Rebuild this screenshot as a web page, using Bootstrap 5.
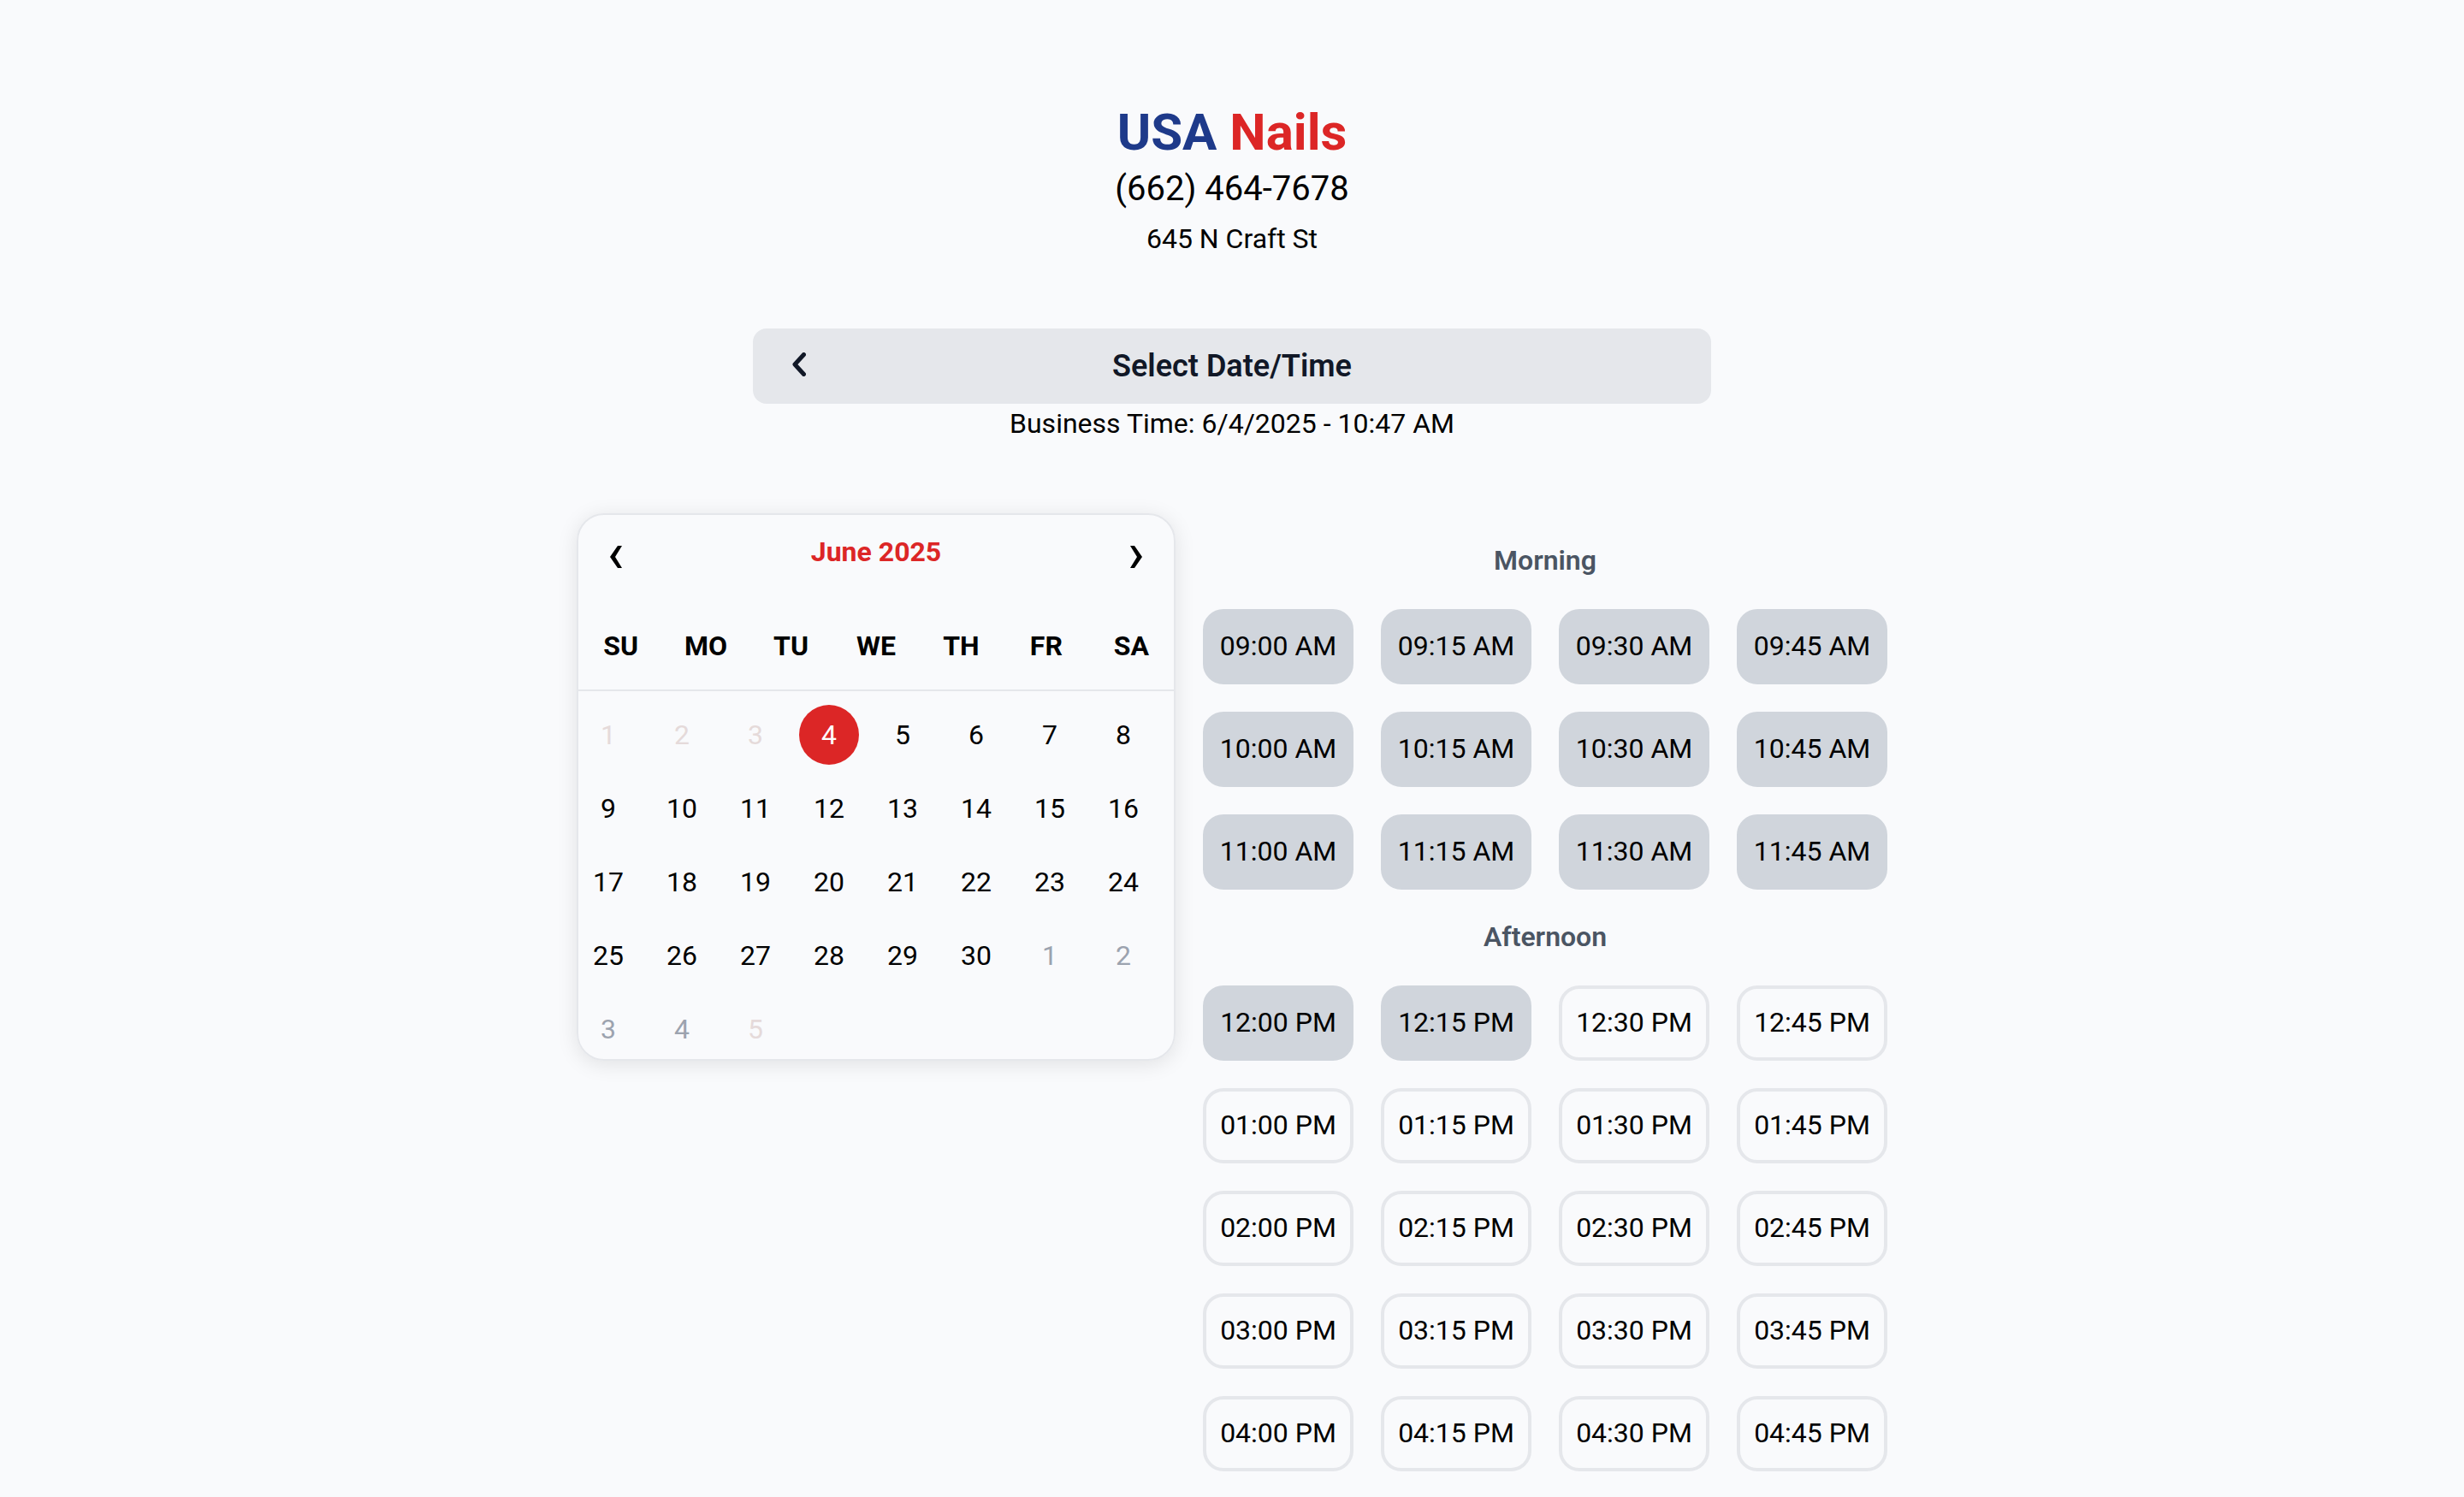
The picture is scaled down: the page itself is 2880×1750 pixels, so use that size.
<!DOCTYPE html>
<html lang="en">
<head>
<meta charset="utf-8">
<meta name="viewport" content="width=device-width, initial-scale=1">
<title>USA Nails - Select Date/Time</title>
<link href="https://cdn.jsdelivr.net/npm/bootstrap@5.3.0/dist/css/bootstrap.min.css" rel="stylesheet">
<style>
  body { background: #f9fafc; color: #000; font-family: Roboto, "Liberation Sans", sans-serif; font-size: 32px; line-height: 46px; }
  .page { padding: 120px 24px 30px; }
  .brand { font-size: 60px; line-height: 70px; font-weight: 700; color: #1e3a8a; }
  .brand span, .month { color: #dc2626; }
  .phone { font-size: 40px; line-height: 62px; }
  .titlebar { max-width: 1120px; margin-top: 82px; padding: 16px 36px; background: #e5e7eb; border-radius: 16px; color: #111827; display: grid; grid-template-columns: 36px 1fr 36px; align-items: center; }
  .titlebar h2 { font-size: 36px; line-height: 56px; font-weight: 600; }
  .plain { border: 0; background: none; padding: 0; color: inherit; display: flex; align-items: center; justify-content: center; }
  .titlebar .plain { padding-bottom: 4px; }
  .booking { gap: 32px; margin-top: 82px; }
  .calendar { width: 700px; max-width: 100%; border: 2px solid #e5e7eb; border-radius: 32px; box-shadow: 0 4px 24px rgba(0, 0, 0, .1); overflow: hidden; }
  .cal-head { padding: 20px 0 26px; }
  .cal-head button { width: 88px; height: 58px; }
  .month { font-size: 32px; line-height: 46px; font-weight: 700; }
  .weekdays { display: grid; grid-template-columns: repeat(7, 1fr); padding: 26px 0 28px; border-bottom: 2px solid #e5e7eb; font-weight: 700; text-align: center; }
  .days { gap: 16px; padding-top: 16px; }
  .days button { width: 70px; height: 70px; border-radius: 50%; }
  .days .past { color: #e5dada; }
  .days .next { color: #9ca3af; }
  .days .today { background: #dc2626; color: #fff; }
  .slots { width: 800px; max-width: 100%; padding-top: 32px; }
  .slots h3 { font-size: 32px; line-height: 46px; font-weight: 600; color: #4b5563; margin: 0 0 34px; text-align: center; }
  .slot-grid { display: grid; grid-template-columns: repeat(auto-fill, minmax(176px, 1fr)); gap: 32px; margin-bottom: 32px; }
  .slot-grid button { height: 88px; padding: 0 0 2px; border: 4px solid #e5e7eb; border-radius: 24px; background: none; color: #000; white-space: nowrap; }
  .slot-grid button:disabled { background: #d0d5dc; border-color: #d0d5dc; }
</style>
</head>
<body>
<main class="page d-flex flex-column align-items-center">
  <header class="text-center">
    <h1 class="brand m-0">USA <span>Nails</span></h1>
    <div class="phone">(662) 464-7678</div>
    <div class="mt-1">645 N Craft St</div>
  </header>

  <div class="titlebar w-100">
    <button class="plain" type="button" aria-label="Back">
      <svg width="16" height="28" viewBox="0 0 16 28" fill="none" stroke="currentColor" stroke-width="5" stroke-linecap="round" stroke-linejoin="round"><path d="M13.5 2.5 3 14l10.500 11.500"/></svg>
    </button>
    <h2 class="m-0 text-center">Select Date/Time</h2>
  </div>
  <div class="text-center">Business Time: 6/4/2025 - 10:47 AM</div>

  <div class="booking d-flex flex-wrap justify-content-center align-items-start w-100">
    <section class="calendar">
      <div class="cal-head d-flex justify-content-between align-items-start">
        <button class="plain" type="button" aria-label="Previous month"><svg width="14" height="26" viewBox="0 0 14 26" fill="currentColor"><path d="M14 0H9L0 13 9 26h5L6 13z"/></svg></button>
        <h3 class="month m-0">June 2025</h3>
        <button class="plain" type="button" aria-label="Next month"><svg width="14" height="26" viewBox="0 0 14 26" fill="currentColor"><path d="M0 0h5l9 13-9 13H0l8-13z"/></svg></button>
      </div>
      <div class="weekdays"><span>SU</span><span>MO</span><span>TU</span><span>WE</span><span>TH</span><span>FR</span><span>SA</span></div>
      <div class="days d-flex flex-wrap">
        <button class="plain past" type="button" disabled>1</button>
        <button class="plain past" type="button" disabled>2</button>
        <button class="plain past" type="button" disabled>3</button>
        <button class="plain today" type="button">4</button>
        <button class="plain" type="button">5</button>
        <button class="plain" type="button">6</button>
        <button class="plain" type="button">7</button>
        <button class="plain" type="button">8</button>
        <button class="plain" type="button">9</button>
        <button class="plain" type="button">10</button>
        <button class="plain" type="button">11</button>
        <button class="plain" type="button">12</button>
        <button class="plain" type="button">13</button>
        <button class="plain" type="button">14</button>
        <button class="plain" type="button">15</button>
        <button class="plain" type="button">16</button>
        <button class="plain" type="button">17</button>
        <button class="plain" type="button">18</button>
        <button class="plain" type="button">19</button>
        <button class="plain" type="button">20</button>
        <button class="plain" type="button">21</button>
        <button class="plain" type="button">22</button>
        <button class="plain" type="button">23</button>
        <button class="plain" type="button">24</button>
        <button class="plain" type="button">25</button>
        <button class="plain" type="button">26</button>
        <button class="plain" type="button">27</button>
        <button class="plain" type="button">28</button>
        <button class="plain" type="button">29</button>
        <button class="plain" type="button">30</button>
        <button class="plain next" type="button">1</button>
        <button class="plain next" type="button">2</button>
        <button class="plain next" type="button">3</button>
        <button class="plain next" type="button">4</button>
        <button class="plain past" type="button" disabled>5</button>
      </div>
    </section>

    <section class="slots">
      <h3>Morning</h3>
      <div class="slot-grid">
        <button type="button" disabled>09:00 AM</button>
        <button type="button" disabled>09:15 AM</button>
        <button type="button" disabled>09:30 AM</button>
        <button type="button" disabled>09:45 AM</button>
        <button type="button" disabled>10:00 AM</button>
        <button type="button" disabled>10:15 AM</button>
        <button type="button" disabled>10:30 AM</button>
        <button type="button" disabled>10:45 AM</button>
        <button type="button" disabled>11:00 AM</button>
        <button type="button" disabled>11:15 AM</button>
        <button type="button" disabled>11:30 AM</button>
        <button type="button" disabled>11:45 AM</button>
      </div>
      <h3>Afternoon</h3>
      <div class="slot-grid mb-0">
        <button type="button" disabled>12:00 PM</button>
        <button type="button" disabled>12:15 PM</button>
        <button type="button">12:30 PM</button>
        <button type="button">12:45 PM</button>
        <button type="button">01:00 PM</button>
        <button type="button">01:15 PM</button>
        <button type="button">01:30 PM</button>
        <button type="button">01:45 PM</button>
        <button type="button">02:00 PM</button>
        <button type="button">02:15 PM</button>
        <button type="button">02:30 PM</button>
        <button type="button">02:45 PM</button>
        <button type="button">03:00 PM</button>
        <button type="button">03:15 PM</button>
        <button type="button">03:30 PM</button>
        <button type="button">03:45 PM</button>
        <button type="button">04:00 PM</button>
        <button type="button">04:15 PM</button>
        <button type="button">04:30 PM</button>
        <button type="button">04:45 PM</button>
      </div>
    </section>
  </div>
</main>
<script src="https://cdn.jsdelivr.net/npm/bootstrap@5.3.0/dist/js/bootstrap.bundle.min.js"></script>
</body>
</html>
